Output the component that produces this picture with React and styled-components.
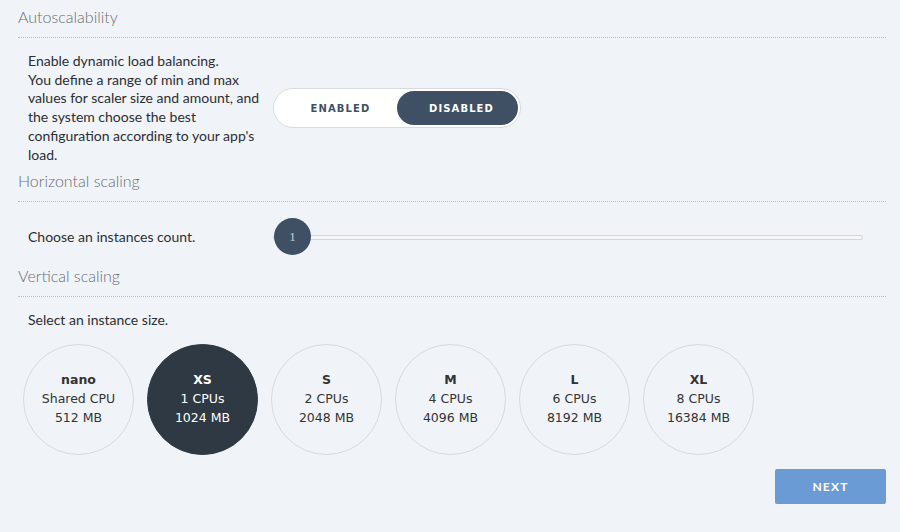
import React, { useState } from 'react';
import styled, { createGlobalStyle } from 'styled-components';

const GlobalStyle = createGlobalStyle`
    html, body {
        margin: 0;
        padding: 0;
        background: #f0f3f8;
    }
    body {
        font-family: Lato, "Open Sans", sans-serif;
        color: #333;
    }
`;

const Page = styled.div`
    width: 900px;
    height: 532px;
    box-sizing: border-box;
    padding: 0 14px 0 18px;
    display: flex;
    flex-direction: column;
`;

const SectionTitle = styled.h2`
    margin: 0;
    height: 38px;
    box-sizing: border-box;
    padding-top: 6px;
    font-size: 16px;
    font-weight: 300;
    line-height: 22px;
    color: #6a6e72;
    border-bottom: 1px dotted #b9bcc0;
`;

const SectionBody = styled.div`
    padding: ${p => p.$pad || '14px 0 0 10px'};
`;

const Row = styled.div`
    display: flex;
    align-items: center;
`;

const Text = styled.p`
    margin: 0;
    width: ${p => p.$width || 'auto'};
    font-size: 14px;
    line-height: 18.7px;
    color: #2b2f33;
`;

const Toggle = styled.div`
    width: 248px;
    height: 40px;
    box-sizing: border-box;
    padding: 2px;
    border: 1px solid #d9dcdf;
    border-radius: 20px;
    background: #fff;
    display: grid;
    grid-template-columns: 1fr 1fr;
`;

const ToggleOption = styled.button`
    border: none;
    border-radius: 18px;
    background: ${p => (p.$active ? '#3f5064' : 'transparent')};
    color: ${p => (p.$active ? '#fff' : '#3f5064')};
    font-family: "DejaVu Sans", Verdana, sans-serif;
    font-weight: bold;
    font-size: 10px;
    letter-spacing: 1.1px;
    cursor: pointer;
    padding: 0 0 0 8px;
`;

const Slider = styled.div`
    position: relative;
    flex: 1;
    height: 38px;
    margin-right: 23px;
    display: flex;
    align-items: center;
`;

const Track = styled.div`
    flex: 1;
    height: 5px;
    box-sizing: border-box;
    border: 1px solid #d3d6d9;
    border-radius: 2px;
    background: #f5f6f8;
`;

const Thumb = styled.div`
    position: absolute;
    left: 1px;
    top: 0;
    width: 37px;
    height: 37px;
    border-radius: 50%;
    background: #3f5064;
    color: #c9ccd0;
    font-family: "Liberation Serif", serif;
    font-size: 13px;
    display: flex;
    align-items: center;
    justify-content: center;
`;

const Sizes = styled.div`
    display: flex;
    gap: 13px;
    margin: 14px 0 0 -5px;
`;

const SizeCircle = styled.button`
    width: 111px;
    height: 111px;
    box-sizing: border-box;
    padding: 0;
    border-radius: 50%;
    border: 1px solid ${p => (p.$active ? '#2e3943' : '#d8d9da')};
    background: ${p => (p.$active ? '#2e3943' : 'transparent')};
    color: ${p => (p.$active ? '#fff' : '#333')};
    font-family: "DejaVu Sans", Verdana, sans-serif;
    font-size: 12.5px;
    line-height: 18.7px;
    display: flex;
    flex-direction: column;
    align-items: center;
    justify-content: center;
    cursor: pointer;
`;

const SizeName = styled.strong`
    font-weight: bold;
`;

const Footer = styled.div`
    display: flex;
    justify-content: flex-end;
    margin-top: 14px;
`;

const NextButton = styled.button`
    width: 111px;
    height: 35px;
    border: none;
    border-radius: 2px;
    background: #6a9bd4;
    color: #fff;
    font-family: Lato, "Open Sans", sans-serif;
    font-weight: bold;
    font-size: 12px;
    letter-spacing: 1.2px;
    cursor: pointer;
`;

const sizes = [
    { name: 'nano', cpu: 'Shared CPU', mem: '512 MB' },
    { name: 'XS', cpu: '1 CPUs', mem: '1024 MB' },
    { name: 'S', cpu: '2 CPUs', mem: '2048 MB' },
    { name: 'M', cpu: '4 CPUs', mem: '4096 MB' },
    { name: 'L', cpu: '6 CPUs', mem: '8192 MB' },
    { name: 'XL', cpu: '8 CPUs', mem: '16384 MB' },
];

export default function App() {
    const [enabled, setEnabled] = useState(false);
    const [size, setSize] = useState('XS');

    return (
        <Page>
            <GlobalStyle />
            <SectionTitle>Autoscalability</SectionTitle>
            <SectionBody>
                <Row>
                    <Text $width="245px">
                        Enable dynamic load balancing.<br />
                        You define a range of min and max values for scaler size and amount, and the system choose the best configuration according to your app's load.
                    </Text>
                    <Toggle>
                        <ToggleOption $active={enabled} onClick={() => setEnabled(true)}>ENABLED</ToggleOption>
                        <ToggleOption $active={!enabled} onClick={() => setEnabled(false)}>DISABLED</ToggleOption>
                    </Toggle>
                </Row>
            </SectionBody>

            <SectionTitle>Horizontal scaling</SectionTitle>
            <SectionBody $pad="16px 0 3px 10px">
                <Row>
                    <Text $width="245px">Choose an instances count.</Text>
                    <Slider>
                        <Track />
                        <Thumb>1</Thumb>
                    </Slider>
                </Row>
            </SectionBody>

            <SectionTitle>Vertical scaling</SectionTitle>
            <SectionBody>
                <Text>Select an instance size.</Text>
                <Sizes>
                    {sizes.map(s => (
                        <SizeCircle key={s.name} $active={size === s.name} onClick={() => setSize(s.name)}>
                            <SizeName>{s.name}</SizeName>
                            <span>{s.cpu}</span>
                            <span>{s.mem}</span>
                        </SizeCircle>
                    ))}
                </Sizes>
            </SectionBody>
            <Footer>
                <NextButton>NEXT</NextButton>
            </Footer>
        </Page>
    );
}
